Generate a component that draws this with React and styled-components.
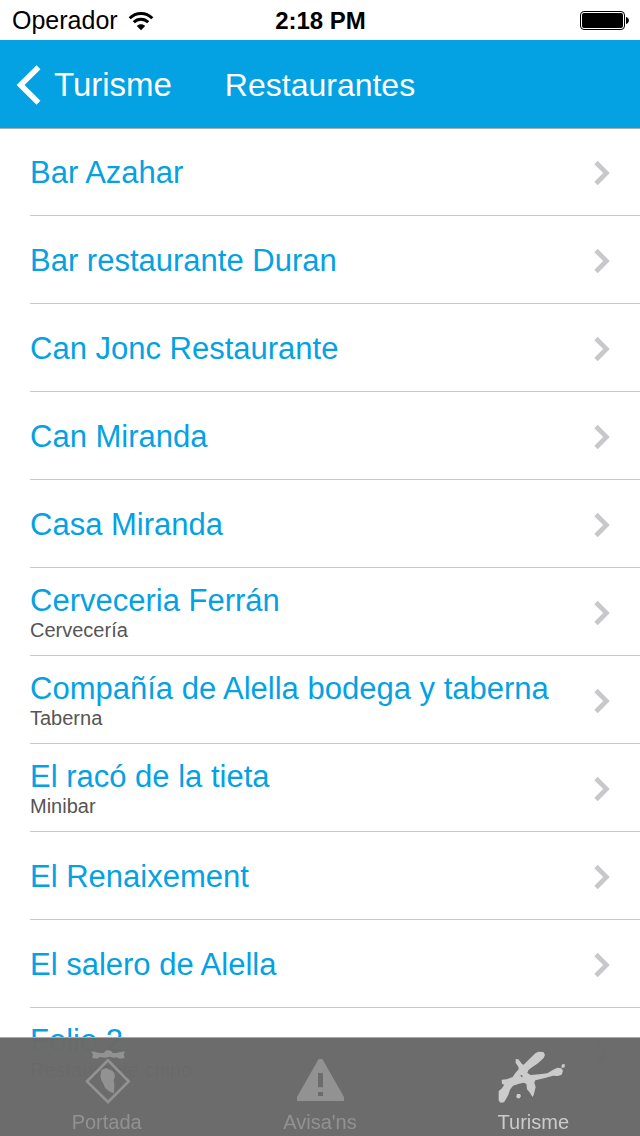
import React from 'react'
import styled, { createGlobalStyle } from 'styled-components'

const GlobalStyle = createGlobalStyle`
    * {
        box-sizing: border-box;
        margin: 0;
        padding: 0;
    }
    body {
        background-color: white;
        font-family: "Liberation Sans", Arial, sans-serif;
    }
`

const Container = styled.div`
    height: 100vh;
    display: flex;
    flex-direction: column;
`

const StatusBar = styled.div`
    flex: none;
    height: 40px;
    padding: 1px 11px 0 12px;
    display: grid;
    grid-template-columns: 1fr auto 1fr;
    align-items: center;
    font-size: 24px;
    color: black;
`

const Carrier = styled.div`
    display: flex;
    align-items: center;
    gap: 10px;
    font-size: 25px;
`

const Time = styled.time`
    font-weight: bold;
`

const Battery = styled.svg`
    justify-self: end;
`

const Header = styled.header`
    flex: none;
    height: 88px;
    padding: 2px 16px 0;
    display: grid;
    grid-template-columns: 1fr auto 1fr;
    align-items: center;
    background-color: #04a1e3;
    color: white;
    box-shadow: 0 1px 0 #a8adb0;
    z-index: 1;
`

const BackButton = styled.button`
    display: flex;
    align-items: center;
    gap: 12px;
    border: none;
    background: none;
    color: white;
    font-family: inherit;
    font-size: 33px;
    cursor: pointer;
`

const Title = styled.h1`
    font-size: 32px;
    font-weight: 300;
`

const List = styled.ul`
    flex: 1;
    min-height: 0;
    padding-bottom: 99px;
    overflow-y: auto;
    scrollbar-width: none;
    list-style: none;
`

const Item = styled.li`
    padding-left: 30px;
`

const ItemLink = styled.a`
    height: 88px;
    padding: 2px 30px 0 0;
    display: flex;
    align-items: center;
    justify-content: space-between;
    border-bottom: 1px solid #c8c7cc;
    color: #04a1e3;
    text-decoration: none;
`

const ItemText = styled.div`
    display: flex;
    flex-direction: column;
`

const Name = styled.span`
    font-size: 31px;
    line-height: 35px;
`

const Kind = styled.span`
    font-size: 20px;
    line-height: 24px;
    color: #555;
`

const TabBar = styled.nav`
    position: fixed;
    left: 0;
    right: 0;
    bottom: 0;
    height: 99px;
    display: flex;
    border-top: 1px solid #a9a9a9;
    background-color: rgba(106, 106, 106, 0.985);
    z-index: 2;
`

const Tab = styled.button`
    flex: 1;
    padding-top: 10px;
    display: flex;
    flex-direction: column;
    align-items: center;
    gap: 6px;
    border: none;
    background: none;
    color: ${props => props.$active ? "#cbcbcb" : "#929292"};
    font-family: inherit;
    font-size: 20px;
    line-height: 24px;
    cursor: pointer;
`

const restaurants = [
    { name: "Bar Azahar" },
    { name: "Bar restaurante Duran" },
    { name: "Can Jonc Restaurante" },
    { name: "Can Miranda" },
    { name: "Casa Miranda" },
    { name: "Cerveceria Ferrán", kind: "Cervecería" },
    { name: "Compañía de Alella bodega y taberna", kind: "Taberna" },
    { name: "El racó de la tieta", kind: "Minibar" },
    { name: "El Renaixement" },
    { name: "El salero de Alella" },
    { name: "Folio 2", kind: "Restaurante chino" },
]

const WifiIcon = () => (
    <svg width="26" height="20" viewBox="0 0 26 20" fill="none" stroke="black" strokeWidth="3">
        <path d="M1.7 7.2C8 .9 18 .9 24.3 7.2" />
        <path d="M5.8 11.3C9.9 7.3 16.1 7.3 20.2 11.3" />
        <path d="M13 19.2L8.8 14.9C11.2 12.7 14.8 12.7 17.2 14.9Z" fill="black" stroke="none" />
    </svg>
)

const BatteryIcon = () => (
    <Battery width="49" height="19" viewBox="0 0 49 19">
        <rect x="0.5" y="0.5" width="44" height="18" rx="3.5" fill="none" stroke="black" />
        <rect x="2" y="2" width="41" height="15" rx="2" fill="black" />
        <path d="M46 6C49.8 6.5 49.8 12.5 46 13Z" fill="black" />
    </Battery>
)

const BackIcon = () => (
    <svg width="26" height="40" viewBox="0 0 26 40" fill="none" stroke="white" strokeWidth="5.6">
        <path d="M22.5 2.3L4.6 20L22.5 37.7" />
    </svg>
)

const Chevron = () => (
    <svg width="16" height="26" viewBox="0 0 16 26" fill="none" stroke="#c7c7cc" strokeWidth="4.6">
        <path d="M2 2.5L12.5 13L2 23.5" />
    </svg>
)

const CrestIcon = () => (
    <svg width="72" height="56" viewBox="2 22 216 168" fill="currentColor">
        <path d="M63 32L76 34L88 37L101 37L105 31L113 28L122 31L127 37L139 37L151 34L164 32L160 42L163 52L149 54L139 50L130 51L118 48L104 51L90 49L79 54L65 52L68 43Z" />
        <path d="M113 59L175 122L113 184L50 122Z" fill="none" stroke="currentColor" strokeWidth="8" />
        <path d="M94 87L108 82L118 87L126 90L132 98L134 109L130 118L132 132L131 158L122 155L112 149L104 141L99 129L93 119L90 105Z" />
    </svg>
)

const WarningIcon = () => (
    <svg width="72" height="56" viewBox="192 144 216 168" fill="currentColor">
        <path fillRule="evenodd" d="M296 177H307L372 291V303H231V291ZM294 219V262H309V219ZM294 276V288H309V276Z" />
    </svg>
)

const TourismIcon = () => (
    <svg width="72" height="56" viewBox="22 24 216 168" fill="currentColor">
        <path fillRule="evenodd" d="M78 57L86 58L97 72L102 74L120 56L138 39L147 35L161 36L166 44L162 54L145 70L125 83L116 91L113 99L123 105L150 103L173 100L189 90L203 83L215 85L220 92L216 104L205 108L190 107L166 114L137 121L134 128L138 141L132 165L128 171L121 158L112 148L110 131L101 128L86 132L70 137L61 149L56 164L49 177L43 187L32 188L27 181V153L35 147L44 134L37 132L36 119L51 118L69 111L77 99L87 88L86 80L78 69ZM92 105L96 112L99 111L97 105Z" />
        <path d="M218 73L225 72V82L217 84L215 79Z" />
        <path d="M82 162H91L94 168L90 175H82L80 169Z" />
    </svg>
)

const tabs = [
    { label: "Portada", Icon: CrestIcon },
    { label: "Avisa'ns", Icon: WarningIcon },
    { label: "Turisme", Icon: TourismIcon, active: true },
]

const App = () => {
  return (
    <Container>
        <GlobalStyle />
        <StatusBar>
            <Carrier>Operador <WifiIcon /></Carrier>
            <Time>2:18 PM</Time>
            <BatteryIcon />
        </StatusBar>
        <Header>
            <BackButton><BackIcon />Turisme</BackButton>
            <Title>Restaurantes</Title>
        </Header>
        <List>
            {restaurants.map(item => (
                <Item key={item.name}>
                    <ItemLink href="#">
                        <ItemText>
                            <Name>{item.name}</Name>
                            {item.kind && <Kind>{item.kind}</Kind>}
                        </ItemText>
                        <Chevron />
                    </ItemLink>
                </Item>
            ))}
        </List>
        <TabBar>
            {tabs.map(({ label, Icon, active }) => (
                <Tab key={label} $active={active}>
                    <Icon />
                    {label}
                </Tab>
            ))}
        </TabBar>
    </Container>
  )
}

export default App
